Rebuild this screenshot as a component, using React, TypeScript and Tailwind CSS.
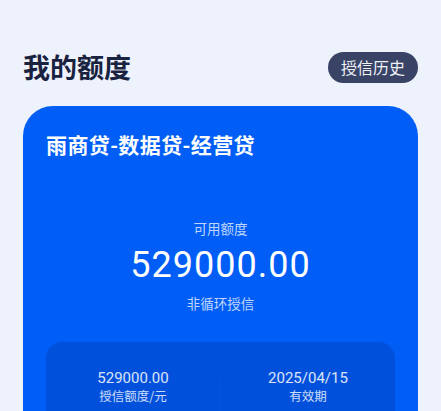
// Credit overview: the "my limit" header with a history pill, then the
// product card showing the available amount and the limit/expiry pair.

const cjk = "font-['Noto_Sans_CJK_SC',sans-serif]"
const num = "font-['Roboto','Noto_Sans_CJK_SC',sans-serif]"

export default function App() {
  return (
    <div className={`min-h-screen overflow-hidden bg-[#edf2fc] px-[23px] pt-[52px] ${cjk}`}>
      <div className="flex h-[31px] items-center justify-between">
        <h1 className="-mt-[3px] text-[27px] leading-[31px] font-semibold text-[#19223f]">我的额度</h1>
        <button className="h-[31px] w-[90px] rounded-full bg-[#384366] text-[16px] leading-[31px] text-[#eef1f8]">
          授信历史
        </button>
      </div>

      <section className="mt-[23px] rounded-[30px] bg-[#005ef7] px-[23px] pt-[24px] pb-[40px]">
        <h2 className="text-[21px] leading-[28px] tracking-[0.4px] font-semibold text-white">雨商贷-数据贷-经营贷</h2>

        <div className="mt-[60px] flex flex-col items-center">
          <p className="text-[13.5px] leading-[20px] text-white/75">可用额度</p>
          <p className={`mt-[5px] text-[36px] leading-[44px] tracking-[1px] text-white ${num}`}>529000.00</p>
          <p className="mt-[6px] text-[13.5px] leading-[20px] text-white/75">非循环授信</p>
        </div>

        <div className="mt-[29px] flex h-[120px] rounded-[16px] bg-[#0050dc] pt-[27px]">
          <Stat value="529000.00" label="授信额度/元" />
          <div className="mt-[11px] h-[80px] w-px bg-white/[0.03]" />
          <Stat value="2025/04/15" label="有效期" />
        </div>
      </section>
    </div>
  )
}

function Stat({ value, label }: { value: string; label: string }) {
  return (
    <div className="flex flex-1 flex-col items-center">
      <span className={`text-[15px] leading-[18px] text-white/85 ${num}`}>{value}</span>
      <span className="text-[12.5px] leading-[18px] text-white/80">{label}</span>
    </div>
  )
}
